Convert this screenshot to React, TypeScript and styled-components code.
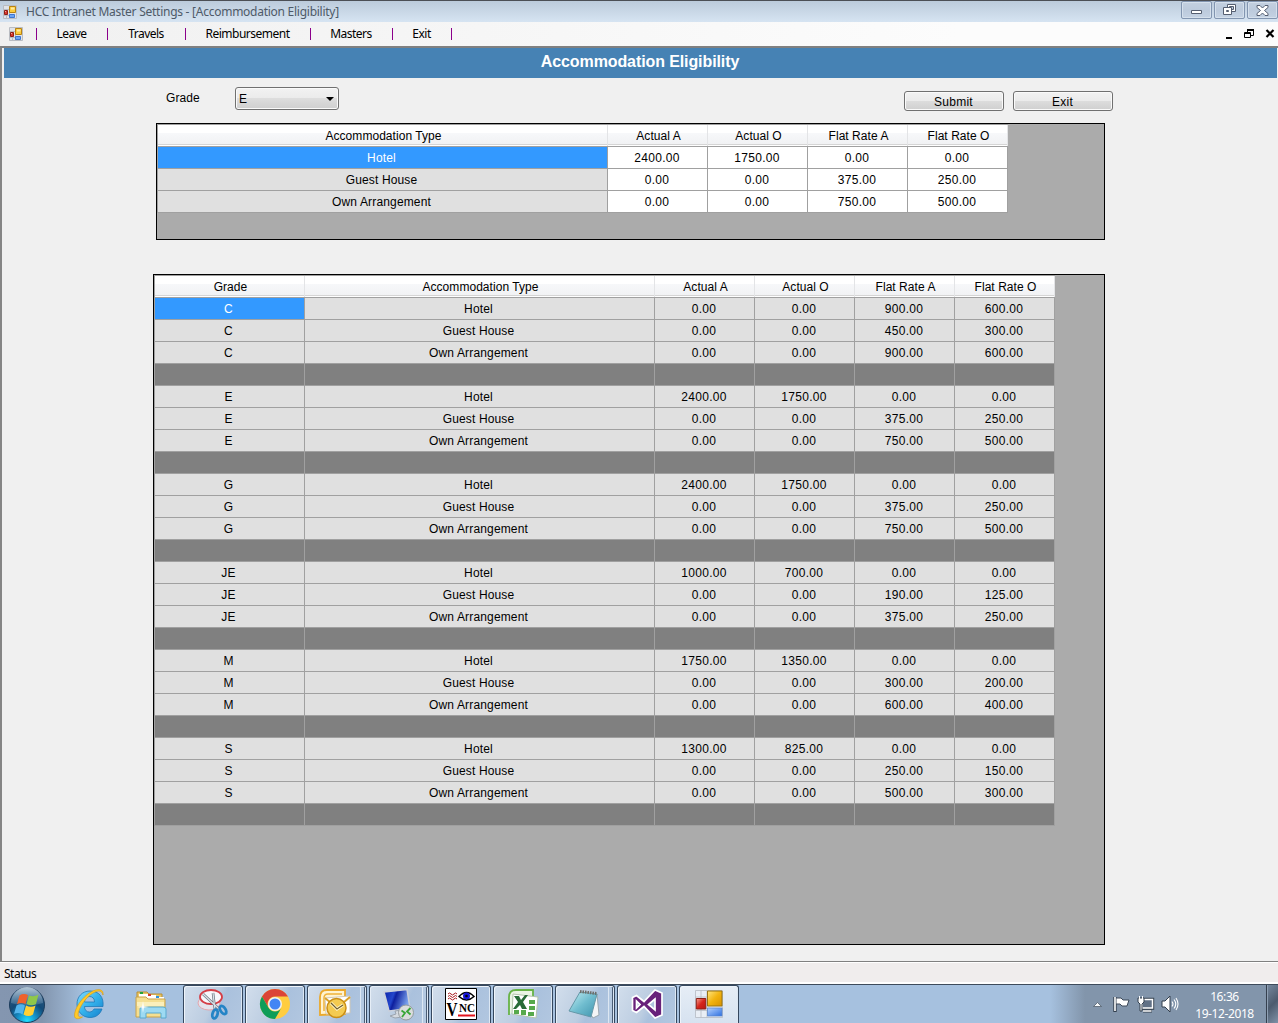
import React from "react";
import styled, { createGlobalStyle } from "styled-components";

const Global = createGlobalStyle`
  * { box-sizing: border-box; }
  body { margin: 0; overflow: hidden; background: #f0f0f0; font-family: "Liberation Sans", Arial, sans-serif; font-size: 12px; color: #000; }
  svg { display: block; }
`;

const ui = `"Noto Sans", "Open Sans", sans-serif`;

const Window = styled.div`
  width: 1278px;
  height: 1023px;
  display: flex;
  flex-direction: column;
  background: #f0f0f0;
`;

const TitleBar = styled.header`
  height: 22px;
  flex: none;
  display: flex;
  align-items: center;
  padding: 0 0 0 3px;
  border-top: 1px solid #4c4f55;
  background: linear-gradient(#bccbdb, #d6e4f2);
`;

const TitleText = styled.span`
  flex: 1;
  margin-left: 9px;
  font: 12px/20px ${ui};
  letter-spacing: -0.26px;
  color: #4e5a68;
  white-space: nowrap;
`;

const CaptionButtons = styled.div`
  display: flex;
  gap: 2px;
  align-self: flex-start;
`;

const CaptionButton = styled.div`
  width: 31px;
  height: 18px;
  display: flex;
  align-items: center;
  justify-content: center;
  border: 1px solid #8295b0;
  border-radius: 2px;
  background: linear-gradient(#c3d0e0, #bccadc 50%, #c4d2e3);
  box-shadow: inset 0 0 0 1px #d5e0ec;
`;

const MenuBar = styled.nav`
  height: 24px;
  flex: none;
  display: flex;
  align-items: center;
  padding-left: 9px;
  background: linear-gradient(90deg, #f0f0f0, #fcfcfc 75%);
  font: 12px/24px ${ui};
`;

const MenuItem = styled.span<{ $w: number }>`
  width: ${(p) => p.$w}px;
  padding-right: 1px;
  text-align: center;
  letter-spacing: -0.5px;
  white-space: nowrap;
`;

const MenuDivider = styled.i<{ $first?: boolean }>`
  width: 1px;
  height: 12px;
  margin-left: ${(p) => (p.$first ? 13 : 0)}px;
  background: #8b008b;
`;

const MdiButtons = styled.div`
  margin-left: auto;
  padding-right: 3px;
`;

const Client = styled.main`
  height: 915px;
  flex: none;
  display: flex;
  flex-direction: column;
  border: solid #696969;
  border-width: 2px 0 0 2px;
  border-top-color: #808080;
  border-left-color: #858585;
  padding: 0 1px 0 2px;
`;

const Banner = styled.h1`
  height: 30px;
  flex: none;
  margin: 0;
  padding-right: 1px;
  text-align: center;
  font: bold 16px/27px "Liberation Sans", Arial, sans-serif;
  letter-spacing: -0.1px;
  color: #fff;
  background: #4682b4;
`;

const FormRow = styled.div`
  height: 45px;
  flex: none;
  display: flex;
  align-items: flex-start;
  padding: 9px 164px 0 162px;
`;

const Label = styled.label`
  width: 69px;
  padding-top: 4px;
  line-height: 14px;
  letter-spacing: 0.1px;
`;

const Combo = styled.div`
  width: 104px;
  height: 23px;
  display: flex;
  align-items: center;
  justify-content: space-between;
  padding: 1px 4px 0 3px;
  border: 1px solid #707070;
  border-radius: 3px;
  background: linear-gradient(#f2f2f2, #ebebeb 48%, #dddddd 50%, #cfcfcf);
  box-shadow: inset 0 0 0 1px #fafafa;
`;

const Buttons = styled.div`
  display: flex;
  gap: 9px;
  margin: 4px 0 0 auto;
`;

const PushButton = styled.button`
  width: 100px;
  height: 20px;
  padding: 2px 1px 0 0;
  border: 1px solid #707070;
  border-radius: 3px;
  background: linear-gradient(#f2f2f2, #ebebeb 48%, #dddddd 50%, #cfcfcf);
  box-shadow: inset 0 0 0 1px #fafafa;
  font: 12px/16px "Liberation Sans", Arial, sans-serif;
  letter-spacing: 0.25px;
  color: #000;
`;

const GridPanel = styled.section<{ $left: number; $width: number; $height: number; $gap?: number }>`
  flex: none;
  width: ${(p) => p.$width}px;
  height: ${(p) => p.$height}px;
  margin: 0 0 ${(p) => p.$gap ?? 0}px ${(p) => p.$left}px;
  border: 1px solid #000;
  background: #ababab;
`;

const Table = styled.div<{ $cols: string }>`
  display: grid;
  grid-template-columns: ${(p) => p.$cols};
  width: max-content;
  border: solid #a0a0a0;
  border-width: 1px 0 0 1px;
`;

const HeadCell = styled.div`
  height: 22px;
  padding: 0 3px 0 4px;
  text-align: center;
  line-height: 22px;
  letter-spacing: 0.05px;
  border-bottom: 1px solid #a0a0a0;
  background: linear-gradient(90deg, transparent calc(100% - 1px), #e3e4e6 0),
    linear-gradient(#fff 0 8px, #f7f8fa 8px, #f1f2f4 19px, #d5d5d5 19px 20px, #fff 20px);
`;

type Tone = "select" | "edit" | "plain" | "gap";
const tones: Record<Tone, string> = { select: "#3399ff", edit: "#ffffff", plain: "#e0e0e0", gap: "#808080" };

const Cell = styled.div<{ $tone: Tone; $numeric?: boolean }>`
  height: 22px;
  padding-right: ${(p) => (p.$numeric ? 1 : 2)}px;
  text-align: center;
  line-height: 22px;
  white-space: nowrap;
  letter-spacing: ${(p) => (p.$numeric ? "0.33px" : "0.15px")};
  color: ${(p) => (p.$tone === "select" ? "#fff" : "#000")};
  background: ${(p) => tones[p.$tone]};
  border: solid #a0a0a0;
  border-width: 0 1px 1px 0;
`;

const StatusBar = styled.footer`
  height: 23px;
  flex: none;
  padding-left: 4px;
  border-top: 1px solid #808080;
  border-bottom: 2px solid #fff;
  background: #f0eded;
  box-shadow: inset 0 1px #fff;
  font: 12px/23px ${ui};
  letter-spacing: -0.5px;
`;

const Taskbar = styled.div`
  height: 39px;
  flex: none;
  display: flex;
  border-top: 1px solid #3e4b5b;
  background: linear-gradient(90deg, #8496b0 0, #8295ae 42px, #a6c1df 85px, #a6c1df 1050px, #8295ab 1085px, #8295ab);
`;

const TaskSlot = styled.div<{ $w: number; $state?: "open" | "active"; $stack?: boolean; $inset?: number; $top?: number }>`
  width: ${(p) => p.$w}px;
  flex: none;
  height: 39px;
  display: flex;
  justify-content: center;
  padding: ${(p) => p.$top ?? 2}px ${(p) => p.$inset ?? (p.$stack ? 5 : 0)}px 0 0;
  margin-right: ${(p) => (p.$state ? 2 : 0)}px;
  border: ${(p) => (p.$state ? "1px solid #35475e" : "0")};
  border-bottom: 0;
  border-radius: 3px 3px 0 0;
  background: ${(p) =>
    p.$state === "active"
      ? "linear-gradient(#e6edf6, #d6e2f0)"
      : p.$state
      ? "linear-gradient(115deg, #d2deec 0, #bccde1 48%, #aac1dd 60%, #b2c7e0)"
      : "none"};
  box-shadow: ${(p) =>
    p.$stack
      ? "inset 1px 1px #e6eef7, inset -1px 0 #dce7f3, inset -2px 0 #4a5d76, inset -5px 0 #b4c9e1, inset -6px 0 #dce7f3"
      : p.$state
      ? "inset 1px 1px #eef4fa, inset -1px 0 #dce7f3"
      : "none"};
`;

const Tray = styled.div`
  margin-left: auto;
  display: flex;
  align-items: center;
`;

const Clock = styled.div`
  width: 82px;
  text-align: center;
  color: #fff;
  font: 12px/17px ${ui};
  letter-spacing: -0.4px;
  padding: 2px 1px 0 0;
`;

const ShowDesktop = styled.div`
  width: 12px;
  height: 39px;
  border-left: 1px solid #35404f;
  box-shadow: inset 1px 0 #8fa0b4;
  background: linear-gradient(135deg, #76889e, #4c5b6e 50%, #8294aa);
`;

const FormsIcon = ({ size }: { size: number }) => (
  <svg width={size} height={size} viewBox="0 0 28 28">
    <defs>
      <linearGradient id="fy" x2="1" y2="1"><stop stopColor="#ffe680" /><stop offset=".5" stopColor="#f2b30f" /><stop offset="1" stopColor="#d89200" /></linearGradient>
      <linearGradient id="fr" x2="1" y2="1"><stop stopColor="#f5a090" /><stop offset=".5" stopColor="#d6251c" /><stop offset="1" stopColor="#b51b12" /></linearGradient>
      <linearGradient id="fb" x2="1" y2="1"><stop stopColor="#b4d2ff" /><stop offset="1" stopColor="#2d6fe0" /></linearGradient>
    </defs>
    <path d="M.5.5h27v27H.5zM.5 7h12M6 .5v27M12 .5v27M.5 20.500h27" fill="#e9eef5" stroke="#b5bac3" strokeWidth=".8" />
    <path d="M12.500 1h14.500v15H12.500z" fill="url(#fy)" stroke="#9a7413" />
    <path d="M1.300 8.500h9.500v10.500H1.300z" fill="url(#fr)" stroke="#8c2018" />
    <path d="M12.500 18h14.500v8h-14.500z" fill="url(#fb)" stroke="#5c86cc" strokeWidth=".8" />
  </svg>
);

const FormsIconSmall = () => (
  <svg width="14" height="14" viewBox="0 0 14 14">
    <path d="M.5.5h13v13H.5zM.5 4.500h6M6.500.5v13M3.500 9v4.500M.5 10.500h6" fill="#e0e3e8" stroke="#b9bcc2" />
    <path d="M6.500 1.500h6v6h-6z" fill="#fbcb3a" stroke="#b98311" />
    <path d="M8 2.500h3.500v2H8z" fill="#ffe9a0" />
    <path d="M1.500 5.500h3v4h-3z" fill="#d8392c" stroke="#8f1d16" />
    <path d="M2 6h1v1H2z" fill="#f2aaa0" />
    <path d="M6.500 9.500h5v3h-5z" fill="#6ea5f4" stroke="#3f77cf" />
  </svg>
);

const StartOrb = () => (
  <svg width="38" height="38" viewBox="0 0 38 38">
    <defs>
      <radialGradient id="orb" cx=".5" cy=".95" r=".9"><stop stopColor="#20e0ff" /><stop offset=".3" stopColor="#1590c8" /><stop offset=".6" stopColor="#134b78" /><stop offset="1" stopColor="#30587e" /></radialGradient>
      <linearGradient id="gloss" x2="0" y2="1"><stop stopColor="#d8e6f0" stopOpacity=".8" /><stop offset="1" stopColor="#a0bfd6" stopOpacity=".2" /></linearGradient>
    </defs>
    <circle cx="19" cy="18" r="17.500" fill="url(#orb)" stroke="#1c3c5c" />
    <path d="M3 16a16 16 0 0 1 32 0q-16 5-32 0z" fill="url(#gloss)" />
    <path d="M11.500 8.500q4-2.500 8.500-.5l-2.500 9q-4-2-8.500 0z" fill="#ef622c" />
    <path d="M21 8.500q5 2 9.500-1l-2.500 9.500q-4.500 2.500-9.500 0z" fill="#8fc74a" />
    <path d="M8.500 18.500q4.500-2.500 8.500 0l-2.500 9q-4-2.500-8.500-.5z" fill="#52b4ec" />
    <path d="M18 18.500q5 2.500 9.500 0l-2.500 9q-4.500 3-9.500 0z" fill="#ffd034" />
  </svg>
);

const IeIcon = () => (
  <svg width="32" height="34" viewBox="0 0 32 34">
    <defs><linearGradient id="ie" x2="1" y2="1"><stop stopColor="#85dcff" /><stop offset=".5" stopColor="#35b3ec" /><stop offset="1" stopColor="#1580cc" /></linearGradient></defs>
    <path d="M17 4C9 4 4 10 4 17s5 13.500 13 13.500c6 0 10-3 12-8.500h-8c-1 2-2.500 3-4.500 3-3 0-5-2-5-5.500H30C31 10 26 4 17 4zm-5.500 11c0-3.500 2-5.500 5-5.500s5 2 5 5.500z" fill="url(#ie)" stroke="#2078b8" strokeWidth=".8" fillRule="evenodd" />
    <path d="M30 8c1-6-5-7-12-3C9 10 1 22 1.500 29c.5 4 5 3 8 1-4 .5-5-1-4-5C8 17 15 8 22 5c4-2 7-1 8 3z" fill="#ffc928" stroke="#d99a10" strokeWidth=".6" />
  </svg>
);

const ExplorerIcon = () => (
  <svg width="34" height="34" viewBox="0 0 34 34">
    <path d="M3 5h10l2 2h13v7H3z" fill="#e9c765" stroke="#b98f35" />
    <path d="M5 7h9v4H5zM14 8h8v4h-8zM22 10h8v4h-8z" fill="#fff" />
    <path d="M6 5h3v2H6z" fill="#24a339" /><path d="M14 7h3v2h-3z" fill="#d63b2c" /><path d="M22 9h3v2h-3z" fill="#2c93dd" />
    <path d="M2 10h10l2 2h17v18H2z" fill="#f5df91" stroke="#c9a24a" />
    <path d="M3 15h27v4H3z" fill="#fbefbb" />
    <path d="M6 31V22q0-2 2-2h21q3 0 3 2v9h-5v-5H12v5z" fill="#9ddaf2" stroke="#58a9cf" />
    <path d="M9 14l.8 5.200 5.200.8-5.200.8L9 26l-.8-5.200L3 20l5.200-.8z" fill="#fff" />
  </svg>
);

const SnipIcon = () => (
  <svg width="34" height="34" viewBox="0 0 34 34">
    <ellipse cx="13" cy="15" rx="11" ry="7" fill="#e4e3ec" stroke="#e5a6ad" />
    <ellipse cx="15" cy="9" rx="11" ry="7" fill="#f7f7fb" stroke="#d53d46" strokeWidth="1.800" />
    <path d="M7 6l16 15M17 5l2 17" stroke="#6d7680" strokeWidth="2.600" />
    <path d="M7 6l16 15M17 5l2 17" stroke="#dce2e8" strokeWidth="1.200" />
    <ellipse cx="19" cy="26" rx="2.500" ry="4.500" transform="rotate(15 19 26)" fill="none" stroke="#2484c6" strokeWidth="2.800" />
    <ellipse cx="27" cy="22" rx="2.500" ry="4.500" transform="rotate(-35 27 22)" fill="none" stroke="#2484c6" strokeWidth="2.800" />
  </svg>
);

const ChromeIcon = () => (
  <svg width="32" height="34" viewBox="0 0 32 34">
    <circle cx="16" cy="16" r="15" fill="#ffcd40" />
    <path d="M3 8.500A15 15 0 0 1 29 8.500H16A7.500 7.500 0 0 0 9.500 19.700z" fill="#db4437" />
    <path d="M3 8.500l6.500 11.300A7.500 7.500 0 0 0 22.500 19.700L16 31A15 15 0 0 1 3 8.500z" fill="#0f9d58" />
    <circle cx="16" cy="16" r="7" fill="#f1f1f1" /><circle cx="16" cy="16" r="5.500" fill="#4285f4" />
  </svg>
);

const OutlookIcon = () => (
  <svg width="34" height="34" viewBox="0 0 34 34">
    <path d="M2 27V9q0-7 7-7h18v24z" fill="#fff3cf" stroke="#eba92c" strokeWidth="1.800" />
    <path d="M6 23V10q0-4 4-4h14" fill="none" stroke="#f0b23a" strokeWidth="1.500" />
    <path d="M7 10l25-2v17L8 26z" fill="#fff" stroke="#d2c8b4" />
    <path d="M7 10l12 10L32 9" fill="none" stroke="#d8a128" strokeWidth="2" />
    <circle cx="18.500" cy="20" r="9.500" fill="#f4cb51" stroke="#c98e17" strokeWidth="1.500" />
    <path d="M13 15l6 6 6-4" fill="none" stroke="#fff5d0" strokeWidth="3" /><path d="M13 15l6 6 6-4" fill="none" stroke="#6f5e28" strokeWidth="1.200" />
  </svg>
);

const RemoteIcon = () => (
  <svg width="34" height="34" viewBox="0 0 34 34">
    <defs><linearGradient id="scr" x2="1" y2=".3"><stop stopColor="#0920a6" /><stop offset=".4" stopColor="#2346cc" /><stop offset=".5" stopColor="#0d1f9e" /><stop offset="1" stopColor="#7ba3ee" /></linearGradient></defs>
    <path d="M3 4l23-2.500 3 19-21 2.500z" fill="url(#scr)" stroke="#cbd0da" strokeWidth="1.500" />
    <path d="M14 23l7-1 2 4 5 2-14 2-5-2 6-2z" fill="#d4d9df" stroke="#9ba4ae" />
    <circle cx="25" cy="24.500" r="7.500" fill="#dadddd" stroke="#949b9e" />
    <path d="M20.500 22.500l3.500 2.500-3 4M29.500 20l-3.500 3.500 3.500 3" fill="none" stroke="#39a637" strokeWidth="1.800" />
  </svg>
);

const VncText = styled.text`
  font-family: "Liberation Serif", "Times New Roman", serif;
  font-weight: bold;
`;

const VncIcon = () => (
  <svg width="34" height="34" viewBox="0 0 34 34">
    <path d="M1.500.5h31v31h-31z" fill="#fff" stroke="#000" />
    <path d="M4 6q1.500-2 3 0t3 0 3 0M4 8.500q1.500-2 3 0t3 0 3 0M4 11q1.500-2 3 0t3 0 3 0" fill="none" stroke="#a8181c" strokeWidth="1" />
    <path d="M15 8.500q7.500-8 15 0-7.500 7-15 0z" fill="#fff" stroke="#000" strokeWidth="1.500" /><circle cx="22.500" cy="8" r="3.500" fill="#1414d8" /><circle cx="22.500" cy="8" r="1.300" fill="#000" />
    <VncText x="2.500" y="28" fontSize="19" textLength="11" lengthAdjust="spacingAndGlyphs">V</VncText>
    <VncText x="15" y="24" fontSize="12" textLength="16" lengthAdjust="spacingAndGlyphs">NC</VncText>
    <path d="M14 27.500h17" stroke="#e3141d" strokeWidth="2" />
  </svg>
);

const ExcelIcon = () => (
  <svg width="34" height="34" viewBox="0 0 34 34">
    <path d="M3 27V9q0-7 7-7h17v6" fill="#eaf4e4" stroke="#67b346" strokeWidth="1.800" />
    <path d="M7 6l25 3-2 21-24-4z" fill="#fff" stroke="#b3c5ab" />
    <path d="M23 12h6v4h-6zM23 18h6v4h-6zM22 24h6v4h-6zM15 22h5v5h-5zM8 22h5v4H8z" fill="#57a94b" />
    <path d="M8 8h5l2 4 4-5h3l-5 7 4 7h-5l-2-4-4 4H7l5-7z" fill="#286b37" />
  </svg>
);

const NotepadIcon = () => (
  <svg width="34" height="34" viewBox="0 0 34 34">
    <defs><linearGradient id="np" x2="1" y2="1"><stop stopColor="#c4eff4" /><stop offset=".5" stopColor="#70bdcf" /><stop offset="1" stopColor="#3f93ad" /></linearGradient></defs>
    <path d="M30 6l2 21-6 3-3-5z" fill="#f3f5f6" stroke="#9aa8b0" />
    <path d="M13 4l17 2-6 23-22-6z" fill="url(#np)" stroke="#6598a8" />
    <path d="M13 3.500l17 2" stroke="#6d6d68" strokeWidth="3" strokeDasharray="1.500 1" />
  </svg>
);

const VisualStudioIcon = () => (
  <svg width="34" height="34" viewBox="0 0 34 34">
    <path d="M2.500 9.500l4-2 7.500 6L25 2l7 3v22l-7 3-11-11.500-7.500 6-4-2zM6.500 13v7l3.500-3.500zM25 11l-6.500 5.500L25 22z" fill="#68217a" fillRule="evenodd" stroke="#fff" strokeWidth="1.700" />
  </svg>
);

const TrayIcons = () => (
  <svg width="94" height="20" viewBox="0 0 94 20">
    <path d="M3.500 12.500l4-4 4 4z" fill="#f7f9fb" stroke="#45515f" strokeWidth=".7" />
    <path d="M25 3v15" stroke="#34404e" strokeWidth="3.400" />
    <path d="M26 4h5l2 2h6l-2 6h-5l-2-2h-4z" fill="#fff" stroke="#3d4958" />
    <path d="M25 3v14" stroke="#fff" strokeWidth="1.600" />
    <path d="M52 5.500h10.500v8.500H52z" fill="#617186" stroke="#34404e" strokeWidth="3.400" /><path d="M52 5.500h10.500v8.500H52z" fill="#617186" stroke="#fff" strokeWidth="1.500" />
    <path d="M53 17h9" stroke="#34404e" strokeWidth="3" /><path d="M53 17h8.500" stroke="#fff" strokeWidth="1.500" />
    <path d="M48 4h6v4l-2 2v7h-2v-7l-2-2z" fill="#fff" stroke="#34404e" /><path d="M49.500 2v3M52.500 2v3" stroke="#fff" />
    <path d="M72 7h3l5-5v16l-5-5h-3z" fill="#fff" stroke="#34404e" />
    <path d="M82 7.500q2 2.500 0 5M84 5.500q3.500 4.500 0 9M86 4q4 6 0 12" fill="none" stroke="#fff" strokeWidth="1.100" />
  </svg>
);

const headers = ["Accommodation Type", "Actual A", "Actual O", "Flat Rate A", "Flat Rate O"];
const kinds = ["Hotel", "Guest House", "Own Arrangement"];

const editable = [
  ["Hotel", "2400.00", "1750.00", "0.00", "0.00"],
  ["Guest House", "0.00", "0.00", "375.00", "250.00"],
  ["Own Arrangement", "0.00", "0.00", "750.00", "500.00"],
];

const Z = "0.00";
const grades: [string, string[][]][] = [
  ["C", [[Z, Z, "900.00", "600.00"], [Z, Z, "450.00", "300.00"], [Z, Z, "900.00", "600.00"]]],
  ["E", [["2400.00", "1750.00", Z, Z], [Z, Z, "375.00", "250.00"], [Z, Z, "750.00", "500.00"]]],
  ["G", [["2400.00", "1750.00", Z, Z], [Z, Z, "375.00", "250.00"], [Z, Z, "750.00", "500.00"]]],
  ["JE", [["1000.00", "700.00", Z, Z], [Z, Z, "190.00", "125.00"], [Z, Z, "375.00", "250.00"]]],
  ["M", [["1750.00", "1350.00", Z, Z], [Z, Z, "300.00", "200.00"], [Z, Z, "600.00", "400.00"]]],
  ["S", [["1300.00", "825.00", Z, Z], [Z, Z, "250.00", "150.00"], [Z, Z, "500.00", "300.00"]]],
];

const summary = grades.flatMap(([grade, rates]) => [
  ...rates.map((rate, i) => [grade, kinds[i], ...rate]),
  ["", "", "", "", "", ""],
]);

const menus: [string, number][] = [["Leave", 70], ["Travels", 77], ["Reimbursement", 124], ["Masters", 81], ["Exit", 58]];

export default function App() {
  return (
    <Window>
      <Global />
      <TitleBar>
        <FormsIconSmall />
        <TitleText>HCC Intranet Master Settings - [Accommodation Eligibility]</TitleText>
        <CaptionButtons>
          <CaptionButton>
            <svg width="12" height="12"><path d="M.5 6.500h10v3H.5z" fill="#fff" stroke="#555e70" /></svg>
          </CaptionButton>
          <CaptionButton>
            <svg width="13" height="12"><path d="M4.500.5h8v7h-8zM6.500 2.500h4v3h-4z" fill="#fff" stroke="#555e70" fillRule="evenodd" /><path d="M.5 3.500h8v7h-8zM3.500 6.500h2v1h-2z" fill="#fff" stroke="#555e70" fillRule="evenodd" /></svg>
          </CaptionButton>
          <CaptionButton>
            <svg width="13" height="11"><path d="M1 .5h3l2.500 2.500L9 .5h3v2L8.500 5.500 12 8.500v2H9L6.500 8 4 10.500H1v-2l3.500-3L1 2.500z" fill="#fff" stroke="#555e70" /></svg>
          </CaptionButton>
        </CaptionButtons>
      </TitleBar>
      <MenuBar>
        <FormsIconSmall />
        <MenuDivider $first />
        {menus.map(([name, w]) => (
          <React.Fragment key={name}>
            <MenuItem $w={w}>{name}</MenuItem>
            <MenuDivider />
          </React.Fragment>
        ))}
        <MdiButtons>
          <svg width="49" height="12" viewBox="0 0 49 12">
            <path d="M0 9h6v2H0z" />
            <path d="M21.500 4V1.500M27.500 1v6.500h-2.500M21 1.500h7M21 2.500h7" fill="none" stroke="#000" />
            <path d="M18.500 4.500h6v5h-6zM18 5.500h7" fill="none" stroke="#000" />
            <path d="M40.500 2l7 7M47.500 2l-7 7" stroke="#000" strokeWidth="2.200" />
          </svg>
        </MdiButtons>
      </MenuBar>
      <Client>
        <Banner>Accommodation Eligibility</Banner>
        <FormRow>
          <Label>Grade</Label>
          <Combo>
            <span>E</span>
            <svg width="8" height="5"><path d="M0 0h8L4 4z" /></svg>
          </Combo>
          <Buttons>
            <PushButton>Submit</PushButton>
            <PushButton>Exit</PushButton>
          </Buttons>
        </FormRow>
        <GridPanel $left={152} $width={949} $height={117} $gap={34}>
          <Table $cols="450px repeat(4, 100px)">
            {headers.map((h) => <HeadCell key={h}>{h}</HeadCell>)}
            {editable.flatMap((row, r) =>
              row.map((v, c) => (
                <Cell key={`${r}-${c}`} $numeric={c > 0} $tone={c > 0 ? "edit" : r === 0 ? "select" : "plain"}>{v}</Cell>
              ))
            )}
          </Table>
        </GridPanel>
        <GridPanel $left={149} $width={952} $height={671}>
          <Table $cols="150px 350px repeat(4, 100px)">
            {["Grade", ...headers].map((h) => <HeadCell key={h}>{h}</HeadCell>)}
            {summary.flatMap((row, r) =>
              row.map((v, c) => (
                <Cell key={`${r}-${c}`} $numeric={c > 1} $tone={!row[0] ? "gap" : r + c === 0 ? "select" : "plain"}>{v}</Cell>
              ))
            )}
          </Table>
        </GridPanel>
      </Client>
      <StatusBar>Status</StatusBar>
      <Taskbar>
        <TaskSlot $w={54}><StartOrb /></TaskSlot>
        <TaskSlot $w={70}><IeIcon /></TaskSlot>
        <TaskSlot $w={59} $inset={6}><ExplorerIcon /></TaskSlot>
        <TaskSlot $w={60} $state="open"><SnipIcon /></TaskSlot>
        <TaskSlot $w={60} $state="open"><ChromeIcon /></TaskSlot>
        <TaskSlot $w={60} $state="open" $stack><OutlookIcon /></TaskSlot>
        <TaskSlot $w={60} $state="open" $stack $inset={3}><RemoteIcon /></TaskSlot>
        <TaskSlot $w={60} $state="open"><VncIcon /></TaskSlot>
        <TaskSlot $w={60} $state="open"><ExcelIcon /></TaskSlot>
        <TaskSlot $w={60} $state="open" $stack $inset={3}><NotepadIcon /></TaskSlot>
        <TaskSlot $w={60} $state="open"><VisualStudioIcon /></TaskSlot>
        <TaskSlot $w={60} $state="active" $top={4}><FormsIcon size={28} /></TaskSlot>
        <Tray>
          <TrayIcons />
          <Clock>16:36<br />19-12-2018</Clock>
          <ShowDesktop />
        </Tray>
      </Taskbar>
    </Window>
  );
}
